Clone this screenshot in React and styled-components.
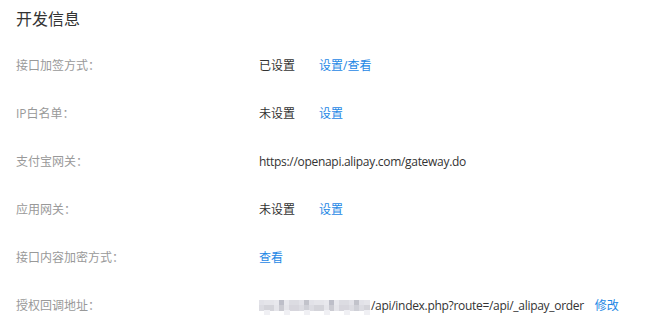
import React from 'react'
import styled, { createGlobalStyle } from 'styled-components'

const Global = createGlobalStyle`
  body{
    margin:0;
    background:#fff;
    font-family:"Open Sans","Noto Sans CJK SC",sans-serif;
  }
`

const rows = [
  { label: '接口加签方式：', value: '已设置', link: '设置/查看' },
  { label: 'IP白名单：', value: '未设置', link: '设置' },
  { label: '支付宝网关：', value: 'https://openapi.alipay.com/gateway.do', url: true },
  { label: '应用网关：', value: '未设置', link: '设置' },
  { label: '接口内容加密方式：', link: '查看' },
  { label: '授权回调地址：', masked: true, value: '/api/index.php?route=/api/_alipay_order', link: '修改', url: true },
]

// pixelated block standing in for the hidden host name
const shades = ['#e2e2e8', '#d4d4da', '#cbcbd2', '#dcdce2', '#c2c3cb', '#e8e8ed', '#d7d6dd', '#cfd0d7', '#e5e5ea', '#bdbec8']
function Mosaic() {
  const cells = []
  for (let r = 0; r < 3; r++) {
    for (let c = 0; c < 22; c++) {
      const n = (c * 7 + r * 13 + ((c * c) % 5)) % shades.length
      if (r === 2 && (c % 4 !== 1)) continue
      cells.push(<rect key={r + '-' + c} x={c * 5} y={r * 5} width="5.5" height="5.5" fill={r === 2 ? '#f0f0f4' : shades[n]} />)
    }
  }
  return (
    <MaskBox width="112" height="15" viewBox="0 0 112 15" shapeRendering="crispEdges">
      {cells}
    </MaskBox>
  )
}

function App() {
  return (
    <Wrap>
      <Global />
      <Title>开发信息</Title>
      <List>
        {rows.map((r) => (
          <Row key={r.label}>
            <Label>{r.label}</Label>
            <Value>
              {r.masked && <Mosaic />}
              {r.value && <Text wide={r.url}>{r.value}</Text>}
              {r.link && <Link href="#">{r.link}</Link>}
            </Value>
          </Row>
        ))}
      </List>
    </Wrap>
  )
}

export default App

const Wrap = styled.div`
  width:652px;
  height:335px;
  padding:9px 16px 0;
  box-sizing:border-box;
  white-space:nowrap;
`

const Title = styled.h3`
  margin:0;
  font-size:16px;
  font-weight:400;
  line-height:20px;
  color:#333;
`

const List = styled.div`
  display:flex;
  flex-direction:column;
  margin-top:12px;
`

const Row = styled.div`
  display:flex;
  align-items:center;
  height:48px;
  font-size:12px;
`

const Label = styled.div`
  width:243px;
  flex-shrink:0;
  color:#999;
`

const Value = styled.div`
  display:flex;
  align-items:center;
`

const Text = styled.span`
  color:#333;
  letter-spacing:${p => p.wide ? '-0.3px' : '0'};
  margin-right:${p => p.wide ? '11px' : '24px'};
`

const MaskBox = styled.svg`
  display:block;
  flex-shrink:0;
  margin-top:4px;
`

const Link = styled.a`
  color:#1e88e5;
  text-decoration:none;
  font-size:12px;
`
